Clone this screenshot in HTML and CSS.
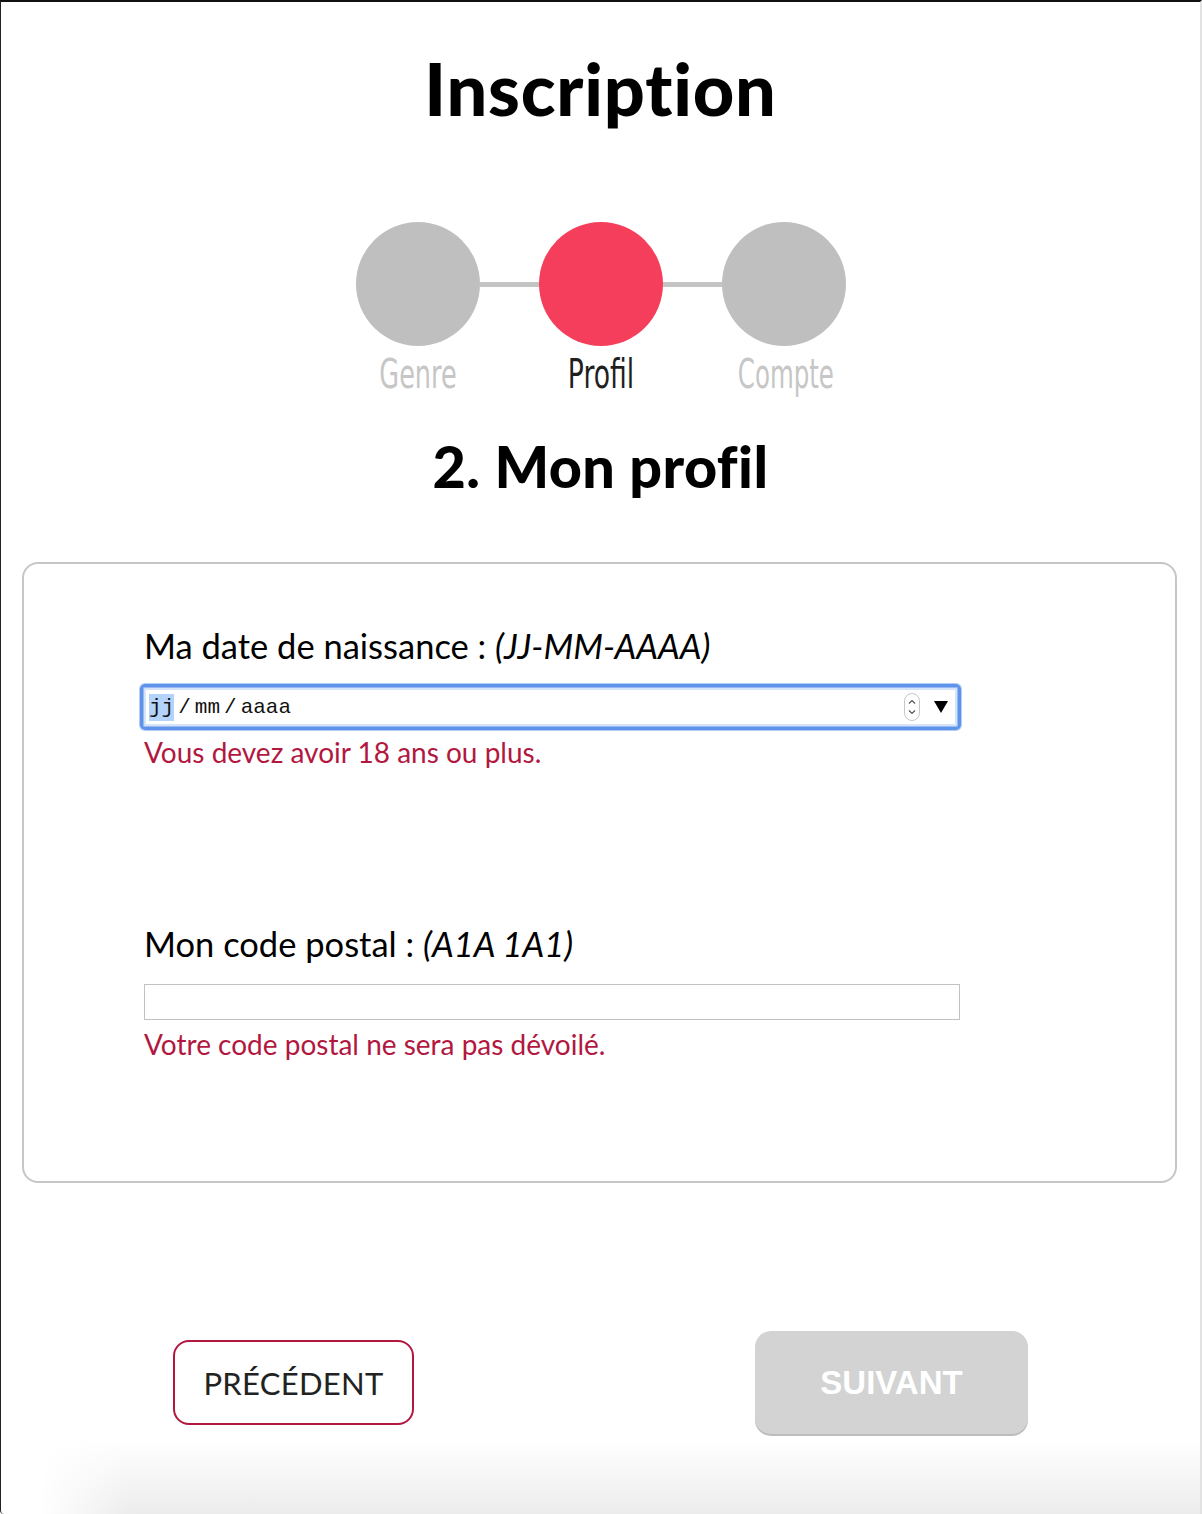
FILE: index.html
```html
<!DOCTYPE html>
<html lang="fr">
<head>
<meta charset="utf-8">
<title>Inscription</title>
<link rel="stylesheet" href="styles.css">
</head>
<body>
<div class="frame">
  <h1 class="title">Inscription</h1>

  <div class="stepper">
    <div class="steps">
      <span class="dot"></span>
      <span class="bar"></span>
      <span class="dot active"></span>
      <span class="bar"></span>
      <span class="dot"></span>
    </div>
    <div class="labels">
      <span class="lbl genre">Genre</span>
      <span class="lbl current">Profil</span>
      <span class="lbl compte">Compte</span>
    </div>
  </div>

  <h2 class="subtitle">2. Mon profil</h2>

  <div class="card">
    <div class="field">
      <label class="flabel">Ma date de naissance : <em>(JJ-MM-AAAA)</em></label>
      <div class="date">
        <span class="dtext"><span class="sel">jj</span><span class="sl">/</span>mm<span class="sl">/</span>aaaa</span>
        <span class="spin"><svg width="12" height="24" viewBox="0 0 12 24"><path d="M3 8.5 L6 5.5 L9 8.5" fill="none" stroke="#555" stroke-width="1.2"/><path d="M3 15.5 L6 18.5 L9 15.5" fill="none" stroke="#555" stroke-width="1.2"/></svg></span>
        <span class="drop"><svg width="14" height="12" viewBox="0 0 14 12"><path d="M0 0 H14 L7 12 Z" fill="#000"/></svg></span>
      </div>
      <p class="hint">Vous devez avoir 18 ans ou plus.</p>
    </div>

    <div class="field second">
      <label class="flabel">Mon code postal : <em>(A1A 1A1)</em></label>
      <div class="postal"></div>
      <p class="hint">Votre code postal ne sera pas dévoilé.</p>
    </div>
  </div>

  <div class="actions">
    <button class="btn prev">PRÉCÉDENT</button>
    <button class="btn next">SUIVANT</button>
  </div>

  <div class="fade"></div>
</div>
</body>
</html>
```

FILE: styles.css
```css
html, body {
  margin: 0;
  padding: 0;
  background: #fff;
}

.frame {
  position: relative;
  box-sizing: border-box;
  width: 1202px;
  height: 1514px;
  border-top: 2px solid #111;
  border-left: 1px solid #222;
  border-right: 2px solid #e2e2e2;
  border-bottom-left-radius: 4px;
  overflow: hidden;
  display: flex;
  flex-direction: column;
  align-items: center;
  font-family: "Lato", "Liberation Sans", sans-serif;
  color: #000;
}

.title {
  margin: 46px 0 0;
  font-family: "Lato", sans-serif;
  font-weight: 900;
  font-size: 72px;
  line-height: 80px;
  letter-spacing: 0.8px;
}

.stepper {
  margin-top: 94px;
  display: flex;
  flex-direction: column;
  align-items: center;
}

.steps {
  display: flex;
  align-items: center;
}

.dot {
  width: 124px;
  height: 124px;
  border-radius: 50%;
  background: #bfbfbf;
}

.dot.active {
  background: #f53e5b;
}

.bar {
  width: 59px;
  height: 5px;
  background: #c4c4c4;
}

.labels {
  display: flex;
  width: 490px;
  justify-content: space-between;
  margin-top: 4px;
}

.lbl {
  width: 124px;
  text-align: center;
  font-family: "Liberation Sans Narrow", "DejaVu Sans Condensed", sans-serif;
  font-size: 40px;
  line-height: 48px;
  color: #c6c6c6;
}

.lbl.genre {
  transform: scaleX(0.71);
}

.lbl.compte {
  transform: translateX(-4px) scaleX(0.68);
}

.lbl.current {
  color: #1f1f1f;
  transform: scaleX(0.74);
}

.subtitle {
  margin: 36px 0 0;
  font-family: "Lato", sans-serif;
  font-weight: 900;
  font-size: 57.5px;
  line-height: 64px;
  letter-spacing: 0.4px;
}

.card {
  margin-top: 64px;
  box-sizing: border-box;
  width: 1155px;
  height: 621px;
  border: 2px solid #c6c6c6;
  border-radius: 16px;
  padding: 58px 0 0 120px;
  align-self: flex-start;
  margin-left: 21px;
}

.field {
  width: 818px;
}

.field.second {
  margin-top: 150px;
}

.flabel {
  display: block;
  font-size: 34.5px;
  line-height: 48px;
  color: #000;
  padding-left: 0;
}

.flabel em {
  font-style: italic;
}

.date {
  box-sizing: border-box;
  margin-top: 14px;
  margin-left: -4px;
  width: 821px;
  height: 46px;
  border: 3px solid #5d93ea;
  border-radius: 5px;
  box-shadow: 0 0 0 1px #b4cdf5, inset 0 0 0 1px #9ab9ee, inset 0 0 0 3px #d6e4fa;
  display: flex;
  align-items: center;
  padding: 0 10px 0 6px;
}

.dtext {
  flex: 1;
  font-family: "Liberation Mono", monospace;
  font-size: 21px;
  color: #111;
}

.sel {
  background: #b4d3fb;
  padding: 2px 0;
}

.sl {
  margin: 0 4px;
}

.spin {
  width: 14px;
  height: 26px;
  border: 1px solid #c8c8c8;
  border-radius: 8px;
  display: flex;
  align-items: center;
  justify-content: center;
  margin-right: 14px;
}

.drop {
  display: flex;
}

.hint {
  margin: 4px 0 0;
  font-size: 28px;
  line-height: 36px;
  color: #b2183f;
  padding-left: 0;
}

.postal {
  box-sizing: border-box;
  margin-top: 16px;
  width: 816px;
  height: 36px;
  border: 1px solid #c2c2c2;
}

.field.second .hint {
  margin-top: 6px;
}

.actions {
  margin-top: 148px;
  width: 855px;
  display: flex;
  justify-content: space-between;
  align-items: center;
  align-self: flex-start;
  margin-left: 172px;
}

.btn {
  box-sizing: border-box;
  font: inherit;
  cursor: pointer;
}

.btn.prev {
  width: 241px;
  height: 85px;
  border: 2px solid #b2183f;
  border-radius: 16px;
  background: #fff;
  color: #222;
  font-size: 31px;
  letter-spacing: 0.3px;
  padding: 0;
}

.btn.next {
  width: 273px;
  height: 103px;
  border: none;
  border-radius: 16px;
  background: #d3d3d3;
  box-shadow: 0 2px 0 #bdbdbd;
  color: #fff;
  font-family: "Liberation Sans", Arial, sans-serif;
  font-weight: 700;
  font-size: 33px;
  padding: 0;
}

.fade {
  position: absolute;
  left: 0;
  right: 0;
  bottom: 0;
  height: 74px;
  background:
    linear-gradient(to right, #fff 0, rgba(255,255,255,0) 90px, rgba(255,255,255,0) 100%),
    linear-gradient(to bottom, #fff 0, #ececec 100%);
  pointer-events: none;
  margin-left: 40px;
}
```
